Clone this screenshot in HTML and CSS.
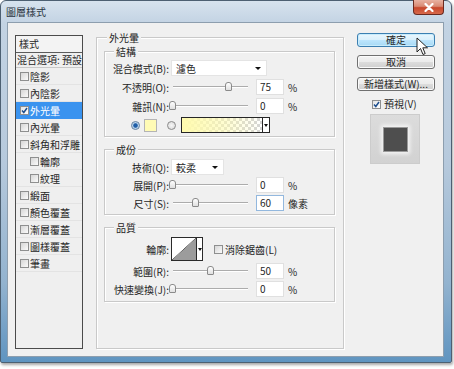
FILE: index.html
```html
<!DOCTYPE html>
<html lang="zh-Hant">
<head>
<meta charset="utf-8">
<title>圖層樣式</title>
<link rel="stylesheet" href="styles.css">
</head>
<body>
<div class="window">
  <div class="titlebar">
    <span class="title">圖層樣式</span>
    <span class="close"><svg width="12" height="9" viewBox="0 0 12 9"><path d="M2.5 1 L9.5 8 M9.5 1 L2.5 8" stroke="#fff" stroke-width="2.2" stroke-linecap="round"/></svg></span>
  </div>
  <div class="client">
    <div class="list">
      <div class="list-head">樣式</div>
      <div class="list-blend">混合選項: 預設</div>
      <div class="item"><span class="cb"></span>陰影</div>
      <div class="item"><span class="cb"></span>內陰影</div>
      <div class="item sel"><span class="cb checked"><svg width="7" height="7" viewBox="0 0 7 7"><path d="M1 3.5 L2.8 5.5 L6 1" fill="none" stroke="#1e4f8e" stroke-width="1.5"/></svg></span>外光暈</div>
      <div class="item"><span class="cb"></span>內光暈</div>
      <div class="item"><span class="cb"></span>斜角和浮雕</div>
      <div class="item sub"><span class="cb"></span>輪廓</div>
      <div class="item sub"><span class="cb"></span>紋理</div>
      <div class="item"><span class="cb"></span>緞面</div>
      <div class="item"><span class="cb"></span>顏色覆蓋</div>
      <div class="item"><span class="cb"></span>漸層覆蓋</div>
      <div class="item"><span class="cb"></span>圖樣覆蓋</div>
      <div class="item"><span class="cb"></span>筆畫</div>
    </div>

    <div class="group outer">
      <div class="gtitle outer-title">外光暈</div>

      <div class="group inner first">
        <div class="gtitle">結構</div>
        <div class="rows">
          <div class="row"><span class="lbl">混合模式(B):</span><span class="select wide"><span>濾色</span><i class="arrow"></i></span></div>
          <div class="row"><span class="lbl">不透明(O):</span><span class="slider"><span class="track"><span class="thumb" style="left:75%"></span></span></span><span class="num">75</span><span class="unit">%</span></div>
          <div class="row"><span class="lbl">雜訊(N):</span><span class="slider"><span class="track"><span class="thumb" style="left:0%"></span></span></span><span class="num">0</span><span class="unit">%</span></div>
          <div class="row colors"><span class="radio on"></span><span class="swatch"></span><span class="radio"></span><span class="grad"><span class="grad-fill"></span><span class="grad-btn"><i class="arrow"></i></span></span></div>
        </div>
      </div>

      <div class="group inner second">
        <div class="gtitle">成份</div>
        <div class="rows tight">
          <div class="row"><span class="lbl">技術(Q):</span><span class="select narrow"><span>較柔</span><i class="arrow"></i></span></div>
          <div class="row"><span class="lbl">展開(P):</span><span class="slider"><span class="track"><span class="thumb" style="left:0%"></span></span></span><span class="num">0</span><span class="unit">%</span></div>
          <div class="row"><span class="lbl">尺寸(S):</span><span class="slider"><span class="track"><span class="thumb" style="left:31%"></span></span></span><span class="num focus">60</span><span class="unit">像素</span></div>
        </div>
      </div>

      <div class="group inner third">
        <div class="gtitle">品質</div>
        <div class="rows tight">
          <div class="row contour-row"><span class="lbl">輪廓:</span><span class="contour"><span class="contour-img"></span><span class="contour-btn"><i class="arrow"></i></span></span><span class="cb aa"></span><span class="aa-text">消除鋸齒(L)</span></div>
          <div class="row"><span class="lbl">範圍(R):</span><span class="slider"><span class="track"><span class="thumb" style="left:50%"></span></span></span><span class="num">50</span><span class="unit">%</span></div>
          <div class="row"><span class="lbl">快速變換(J):</span><span class="slider"><span class="track"><span class="thumb" style="left:0%"></span></span></span><span class="num">0</span><span class="unit">%</span></div>
        </div>
      </div>
    </div>

    <div class="side">
      <div class="btn default">確定</div>
      <div class="btn">取消</div>
      <div class="btn">新增樣式(W)...</div>
      <div class="preview-check"><span class="cb checked"><svg width="7" height="7" viewBox="0 0 7 7"><path d="M1 3.5 L2.8 5.5 L6 1" fill="none" stroke="#1e4f8e" stroke-width="1.5"/></svg></span><span>預視(V)</span></div>
      <div class="preview"><div class="preview-square"></div></div>
    </div>
  </div>
</div>
<svg class="cursor" width="13" height="19" viewBox="0 0 13 19"><path d="M1 1 L1 15 L4.5 11.5 L7 17.5 L9.2 16.6 L6.8 10.8 L11.5 10.8 Z" fill="#fff" stroke="#222" stroke-width="1" stroke-linejoin="round"/></svg>
</body>
</html>
```
FILE: styles.css
```css
* { box-sizing: border-box; }
html, body { margin: 0; padding: 0; }
body {
  width: 454px;
  height: 369px;
  overflow: hidden;
  background: #ffffff;
  font-family: "Noto Sans CJK TC", "Noto Sans", sans-serif;
  font-size: 10px;
  color: #262626;
}
.window {
  width: 452px;
  height: 363px;
  padding: 0 7px 5px 6px;
  border: 1px solid #4d6072;
  border-radius: 6px 6px 2px 2px;
  background: linear-gradient(180deg, #d7e3ee 0px, #c3d3e3 22px, #b6c9dc 45%, #93b3cf 78%, #5f94c0 100%);
  box-shadow: 1px 2px 3px rgba(0,0,0,0.35);
  display: flex;
  flex-direction: column;
}
.titlebar {
  height: 21px;
  display: flex;
  justify-content: space-between;
  align-items: flex-start;
  flex: none;
}
.title {
  font-size: 10px;
  line-height: 12px;
  margin: 5px 0 0 -1px;
  color: #2a3440;
}
.close {
  width: 31px;
  height: 15px;
  margin-top: -1px;
  border: 1px solid #6a2a20;
  border-top: none;
  border-radius: 0 0 4px 4px;
  background: linear-gradient(180deg, #e8b2a2 0%, #d98a74 45%, #c8472c 55%, #d76a4c 100%);
  display: flex;
  align-items: center;
  justify-content: center;
}
.client {
  flex: 1;
  display: flex;
  align-items: flex-start;
  background: #f0f0f0;
  border: 1px solid #8d9eae;
}

/* left list */
.list {
  margin: 12px 0 0 7px;
  width: 68px;
  height: 314px;
  border: 1px solid #4b4b4b;
  background: #efefef;
  overflow: hidden;
  flex: none;
}
.list-head {
  height: 17px;
  border-bottom: 1px solid #5c5c5c;
  padding-left: 3px;
  line-height: 16px;
  background: #f3f3f3;
}
.list-blend {
  height: 15px;
  border-bottom: 1px solid #c8c8c8;
  padding-left: 1px;
  line-height: 14px;
  white-space: nowrap;
  overflow: hidden;
}
.item {
  height: 17px;
  display: flex;
  align-items: center;
  padding-left: 4px;
  border-bottom: 1px solid #e3e3e3;
  white-space: nowrap;
  line-height: 13px;
}
.item.sub { padding-left: 14px; }
.item.sel { background: #3a93ef; color: #ffffff; border-bottom-color: #3a93ef; }
.cb {
  width: 9px;
  height: 9px;
  border: 1px solid #8e8f8f;
  background: linear-gradient(135deg, #d6d6d6, #fbfbfb);
  margin-right: 1px;
  flex: none;
  display: flex;
  align-items: center;
  justify-content: center;
}
.cb.checked { background: linear-gradient(135deg, #e4e4e4, #ffffff); }
.cb svg { display: block; }

/* group boxes */
.group {
  border: 1px solid #c9c9c9;
  box-shadow: inset 1px 1px 0 #ffffff, 1px 1px 0 #ffffff;
}
.gtitle {
  width: max-content;
  height: 12px;
  line-height: 12px;
  margin: -6px 0 0 9px;
  padding: 0 2px;
  background: #f0f0f0;
  white-space: nowrap;
}
.outer {
  margin: 14px 0 0 13px;
  width: 248px;
  height: 312px;
  padding: 0 8px 0 7px;
  flex: none;
}
.outer-title { margin-left: 3px; }
.inner.first { margin-top: 7px; padding-bottom: 3px; }
.inner.second { margin-top: 12px; padding-bottom: 3px; }
.inner.third { margin-top: 12px; padding-bottom: 4px; }

.rows { display: flex; flex-direction: column; gap: 3px; margin-top: 2px; }
.rows.tight { gap: 2px; margin-top: 3px; }
.row { height: 16px; display: flex; align-items: center; }
.lbl {
  width: 64px;
  margin-right: 2px;
  text-align: right;
  flex: none;
  line-height: 13px;
  white-space: nowrap;
}
.select {
  height: 16px;
  background: #ffffff;
  border: 1px solid #e4e4e4;
  display: flex;
  align-items: center;
  justify-content: space-between;
  padding: 0 5px 0 4px;
  line-height: 13px;
  flex: none;
}
.select.wide { width: 96px; }
.select.narrow { width: 53px; }
.arrow {
  display: block;
  width: 0;
  height: 0;
  border-left: 3px solid transparent;
  border-right: 3px solid transparent;
  border-top: 3px solid #111;
}
.slider {
  width: 81px;
  height: 16px;
  display: flex;
  align-items: center;
  padding: 0 4px 0 2px;
  flex: none;
}
.track {
  position: relative;
  flex: 1;
  height: 2px;
  border-top: 1px solid #acacac;
  border-bottom: 1px solid #ffffff;
}
.thumb {
  position: absolute;
  top: -5px;
  margin-left: -4px;
  width: 7px;
  height: 9px;
  border: 1px solid #8a8a8a;
  border-radius: 3px 3px 1px 1px;
  background: linear-gradient(180deg, #ffffff, #e0e0e0);
}
.num {
  width: 28px;
  height: 16px;
  margin-left: 4px;
  background: #ffffff;
  border: 1px solid #e0e0e0;
  padding-left: 3px;
  line-height: 14px;
  flex: none;
}
.num.focus { border-color: #93b8de; }
.unit { margin-left: 4px; line-height: 13px; white-space: nowrap; }

/* color row */
.colors { padding-left: 26px; }
.radio {
  width: 9px;
  height: 9px;
  border-radius: 50%;
  border: 1px solid #8a8a8a;
  background: radial-gradient(circle, #f6f6f6 0, #d6d6d6 100%);
  flex: none;
}
.radio.on {
  border-color: #5f7f9e;
  background: radial-gradient(circle, #1f5ea6 0, #1f5ea6 1.8px, #a8c8e6 2.6px, #e6eef6 4px);
}
.swatch {
  width: 13px;
  height: 13px;
  margin: 0 10px 0 4px;
  background: #fffbb5;
  border: 1px solid #b4b4b4;
  flex: none;
}
.grad {
  width: 89px;
  height: 16px;
  margin-left: 5px;
  border: 1px solid #262626;
  display: flex;
  flex: none;
}
.grad-fill {
  flex: 1;
  background:
    linear-gradient(90deg, #fffbae 0%, rgba(255,251,174,0.55) 55%, rgba(255,251,174,0) 100%),
    repeating-conic-gradient(#d4d4d4 0 25%, #ffffff 0 50%) 0 0 / 6px 6px;
}
.grad-btn {
  width: 7px;
  border-left: 1px solid #262626;
  background: #ffffff;
  display: flex;
  align-items: center;
  justify-content: center;
}
.grad-btn .arrow { border-left-width: 2px; border-right-width: 2px; }

/* contour */
.contour-row { height: 24px; }
.contour {
  height: 24px;
  width: 32px;
  border: 1px solid #2a2a2a;
  display: flex;
  flex: none;
}
.contour-img {
  width: 24px;
  background: linear-gradient(to top left, #9c9c9c 49%, #5a5a5a 50%, #ffffff 52%);
}
.contour-btn {
  flex: 1;
  border-left: 1px solid #2a2a2a;
  background: #ffffff;
  display: flex;
  align-items: center;
  justify-content: center;
}
.contour-btn .arrow { border-left-width: 2px; border-right-width: 2px; }
.cb.aa { margin-left: 11px; margin-right: 2px; }
.aa-text { line-height: 13px; white-space: nowrap; }

/* right side */
.side {
  margin: 10px 0 0 13px;
  width: 78px;
  display: flex;
  flex-direction: column;
  flex: none;
}
.btn {
  height: 14px;
  border: 1px solid #707070;
  border-radius: 3px;
  background: linear-gradient(180deg, #f3f3f3 0%, #ebebeb 50%, #dddddd 50%, #cfcfcf 100%);
  box-shadow: inset 0 0 0 1px #fbfbfb;
  text-align: center;
  line-height: 12px;
  white-space: nowrap;
}
.btn + .btn { margin-top: 8px; }
.btn.default {
  border-color: #3c7fb1;
  background: linear-gradient(180deg, #eaf6fd 0%, #d9f0fc 50%, #bee6fd 50%, #a7d9f5 100%);
  box-shadow: inset 0 0 0 1px #c8ecfc;
}
.preview-check {
  height: 12px;
  margin-top: 7px;
  padding-left: 15px;
  display: flex;
  align-items: center;
  line-height: 12px;
}
.preview-check .cb { margin-right: 3px; }
.preview {
  margin: 4px 0 0 13px;
  width: 50px;
  height: 50px;
  background: linear-gradient(180deg, #dcdcdc, #d2d2d2);
  border: 1px solid #cccccc;
  display: flex;
  align-items: center;
  justify-content: center;
}
.preview-square {
  width: 25px;
  height: 25px;
  background: #4e4e4e;
  border: 1px solid #9a9a9a;
  box-shadow: 0 0 4px 2px rgba(255,255,255,0.75);
}
.cursor {
  position: absolute;
  left: 416px;
  top: 37px;
}
```
